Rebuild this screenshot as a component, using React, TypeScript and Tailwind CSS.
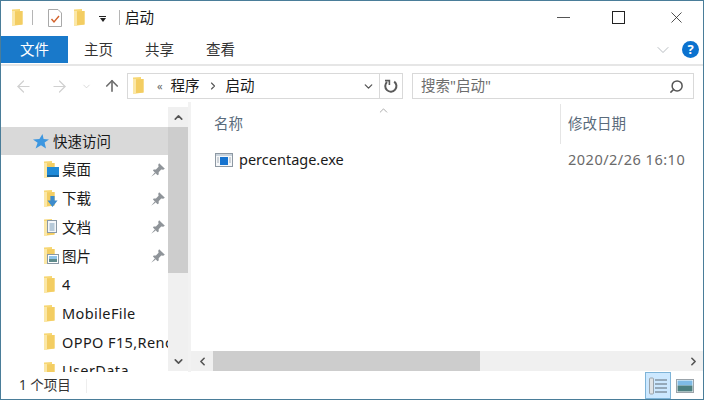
import React from "react"
import { ArrowLeft, ArrowRight, ArrowUp, ChevronDown, ChevronLeft, ChevronRight, ChevronUp, Search, X } from "lucide-react"

const FONT = "font-['Noto_Sans','Noto_Sans_CJK_SC',sans-serif]"

function Folder({ className = "" }: { className?: string }) {
  return (
    <svg width="14" height="20" viewBox="0 0 14 20" className={className}>
      <path d="M1 1.5 L9 1 L9 3 L11.5 3 L11.5 16.5 L1 18 Z" fill="#f7d774" />
      <path d="M1 3 L4 3 L4 18 L1 18 Z" fill="#fbe7a6" />
      <path d="M4 3.5 L11.5 3 L11.5 16.5 L4 17 Z" fill="#f3cd62" />
    </svg>
  )
}

function Pin() {
  return (
    <svg width="16" height="16" viewBox="0 0 14 14">
      <path d="M8 1 L13 6 L11.5 6.8 L9.8 6.6 L7.6 9 L7.6 11 L6.6 11.5 L2.6 7.5 L3.2 6.5 L5.2 6.5 L7.5 4.2 L7.2 2.5 Z" fill="#8f9499" />
      <path d="M4.2 9.2 L1 13 L5 10" fill="#8f9499" />
    </svg>
  )
}

function NavRow({ label, badge, badgeTop, pinned, wide }: { label: string; badge?: React.ReactNode; badgeTop?: string; pinned?: boolean; wide?: boolean }) {
  return (
    <div className="h-[28.7px] flex items-center pl-[42px] shrink-0 relative">
      <Folder />
      {badge && <span className={`absolute left-[46px] flex ${badgeTop}`}>{badge}</span>}
      <span className={`ml-[5px] text-[14.5px] text-[#1a1a1a] whitespace-nowrap overflow-hidden w-[106px] ${wide ? "tracking-[0.4px]" : ""}`}>{label}</span>
      {pinned && <span className="absolute left-[149px] top-[6px]"><Pin /></span>}
    </div>
  )
}

const desktopBadge = (
  <svg width="12" height="10" viewBox="0 0 12 10"><rect x="0" y="0" width="12" height="8" fill="#1f8ad8" /><rect x="0" y="8" width="12" height="2" fill="#14619c" /></svg>
)
const downloadBadge = (
  <svg width="11" height="11" viewBox="0 0 11 12"><path d="M3.2 0 H7.8 V5 H11 L5.5 12 L0 5 H3.2 Z" fill="#3e8ccc" /></svg>
)
const docBadge = (
  <svg width="10" height="13" viewBox="0 0 10 13"><rect x="0.5" y="0.5" width="9" height="12" fill="#f4f7fa" stroke="#8a99a6" /><path d="M2.5 4 H7.5 M2.5 6 H7.5 M2.5 8 H7.5 M2.5 10 H7.5" stroke="#7b9db8" /></svg>
)
const picBadge = (
  <svg width="12" height="10" viewBox="0 0 12 10"><rect x="0.5" y="0.5" width="11" height="9" fill="#fff" stroke="#8a99a6" /><rect x="2" y="2" width="8" height="3" fill="#8fc3e8" /><rect x="2" y="5" width="8" height="3" fill="#5f8c8c" /></svg>
)

export default function App() {
  return (
    <div className={`w-[704px] h-[400px] bg-white border border-[#4a7d99] flex flex-col overflow-hidden ${FONT}`}>
      {/* title bar */}
      <div className="h-[35px] pb-[2px] flex items-center shrink-0 relative">
        <Folder className="ml-[10px]" />
        <div className="w-px h-[15px] bg-[#b5b5b5] ml-[7px]" />
        <svg width="16" height="20" viewBox="0 0 16 20" className="ml-[14px]">
          <path d="M1.5 1.5 H11 L14.5 5 V18.5 H1.5 Z" fill="#fff" stroke="#a9a9a9" />
          <path d="M4.5 11 L7 14 L12 8" fill="none" stroke="#d2622b" strokeWidth="1.4" />
        </svg>
        <Folder className="ml-[10px]" />
        <div className="ml-[12px] flex flex-col items-center gap-[1px] mt-[3px]">
          <div className="w-[7px] h-px bg-[#222]" />
          <div className="w-0 h-0 border-x-[3.5px] border-x-transparent border-t-[4px] border-t-[#222]" />
        </div>
        <div className="w-px h-[15px] bg-[#b5b5b5] ml-[13px]" />
        <span className="ml-[5px] text-[14.5px] text-[#1a1a1a]">启动</span>
        <div className="ml-auto flex items-center">
          <div className="w-[13px] h-[1.5px] bg-[#555]" />
          <div className="w-[13px] h-[13px] border border-[#222] ml-[42px]" />
          <X size={19} strokeWidth={1} className="ml-[42px] mr-[17px] text-[#222]" />
        </div>
      </div>

      {/* ribbon tabs */}
      <div className="h-[27px] mb-[1px] flex items-stretch shrink-0 box-content">
        <div className="w-[67px] bg-[#1979ca] text-white text-[14.5px] flex items-center justify-center">文件</div>
        <div className="flex text-[14.5px] text-[#333] items-center">
          <span className="ml-[16px]">主页</span>
          <span className="ml-[32px]">共享</span>
          <span className="ml-[32px]">查看</span>
        </div>
        <div className="ml-auto flex items-center">
          <ChevronDown size={20} strokeWidth={1} className="text-[#aab0b5] mr-[9px]" />
          <div className="w-[17px] h-[17px] rounded-full bg-[#0b72cf] text-white text-[13px] font-bold flex items-center justify-center mr-[4px]">?</div>
        </div>
      </div>
      <div className="h-[2px] bg-[#e6e6e6] shrink-0" />

      {/* address row */}
      <div className="h-[36px] pt-[4px] flex items-center shrink-0">
        <ArrowLeft size={19} strokeWidth={1.5} className="ml-[13px] text-[#d0d0d0]" />
        <ArrowRight size={19} strokeWidth={1.5} className="ml-[17px] text-[#d0d0d0]" />
        <ChevronDown size={11} strokeWidth={1.5} className="ml-[12px] text-[#c8c8c8]" />
        <ArrowUp size={18} strokeWidth={2.2} className="ml-[11px] text-[#6e6e6e]" />
        <div className="ml-[6px] w-[276px] h-[26px] border border-[#d9d9d9] flex items-center">
          <Folder className="ml-[4px]" />
          <span className="ml-[11px] text-[11px] text-[#666]">«</span>
          <span className="ml-[8px] text-[14.5px] text-[#1a1a1a]">程序</span>
          <ChevronRight size={12} strokeWidth={2.2} className="ml-[7px] text-[#555]" />
          <span className="ml-[7px] text-[14.5px] text-[#1a1a1a]">启动</span>
          <ChevronDown size={13} strokeWidth={2.4} className="ml-auto mr-[2px] text-[#555]" />
          <div className="ml-[2px] h-full border-l border-[#d9d9d9] w-[23px] flex items-center justify-center">
            <svg width="16" height="16" viewBox="0 0 16 16" fill="none" stroke="#5a5a5a" strokeWidth="2">
              <path d="M11.2 3.6 A5.6 5.6 0 1 1 4 4" />
              <path d="M2 2.6 H6.4 V7" strokeWidth="1.6" />
            </svg>
          </div>
        </div>
        <div className="ml-[9px] w-[282px] h-[26px] border border-[#d9d9d9] flex items-center">
          <span className="ml-[8px] text-[14.5px] text-[#6d6d6d]">搜索"启动"</span>
          <Search size={15} strokeWidth={2.4} className="ml-auto mr-[9px] text-[#555] -scale-x-100" />
        </div>
      </div>

      {/* body */}
      <div className="flex-1 min-h-0 flex">
        <div className="w-[167px] shrink-0 overflow-hidden pt-[25px] flex flex-col">
          <div className="h-[28px] mb-[1px] pt-[1px] bg-[#d9d9d9] flex items-center pl-[32px] shrink-0">
            <svg width="16" height="15" viewBox="0 0 16 15"><path d="M9.5 0 L10.6 5 L16 5.6 L11.6 8.6 L13 14.5 L8 11.2 L2.6 14.5 L4.6 8.8 L0 5.6 L6.4 5 Z" fill="#3d97e0" /></svg>
            <span className="ml-[4px] text-[14.5px] text-[#1a1a1a]">快速访问</span>
          </div>
          <NavRow label="桌面" badge={desktopBadge} badgeTop="top-[11px]" pinned />
          <NavRow label="下载" badge={downloadBadge} badgeTop="top-[11px]" pinned />
          <NavRow label="文档" badge={docBadge} badgeTop="top-[7px]" pinned />
          <NavRow label="图片" badge={picBadge} badgeTop="top-[12px]" pinned />
          <NavRow label="4" />
          <NavRow label="MobileFile" wide />
          <NavRow label="OPPO F15,Reno" wide />
          <NavRow label="UserData" wide />
        </div>

        {/* sidebar scrollbar */}
        <div className="w-[20px] shrink-0 flex flex-col pt-[5px] pb-[1px]">
          <div className="h-[20px] bg-[#f0f0f0] flex items-center justify-center shrink-0">
            <ChevronUp size={13} strokeWidth={3} className="text-[#555]" />
          </div>
          <div className="h-[146px] bg-[#cdcdcd] shrink-0" />
          <div className="flex-1 bg-[#f0f0f0]" />
          <div className="h-[20px] bg-[#f0f0f0] flex items-center justify-center shrink-0">
            <ChevronDown size={13} strokeWidth={3} className="text-[#555]" />
          </div>
        </div>
        <div className="w-[3px] bg-[#f2f2f2] shrink-0" />

        {/* main pane */}
        <div className="flex-1 min-w-0 flex flex-col relative">
          <ChevronUp size={13} strokeWidth={1} className="absolute left-[186px] top-[2px] text-[#666]" />
          <div className="flex-1 min-h-0">
            <div className="h-[40px] mt-[2px] flex items-center text-[14.5px] text-[#5a6b7b]">
              <span className="ml-[23px] w-[346px]">名称</span>
              <div className="w-px h-[40px] bg-[#e5e5e5]" />
              <span className="ml-[7px] whitespace-nowrap">修改日期</span>
            </div>
            <div className="flex items-center h-[28px] mt-[2px]">
              <svg width="18" height="14" viewBox="0 0 18 14" className="ml-[24px]">
                <rect x="0.5" y="0.5" width="17" height="13" fill="#f5f7f9" stroke="#8d98a3" />
                <rect x="1" y="1" width="16" height="2" fill="#c9d3dc" />
                <rect x="5" y="4" width="8" height="8" fill="#1673cf" />
                <path d="M2 5 H4 M2 7 H4 M2 9 H4 M14 5 H16 M14 7 H16 M14 9 H16" stroke="#a5aeb7" />
              </svg>
              <span className="ml-[6px] text-[14.5px] text-[#1a1a1a] w-[329px]">percentage.exe</span>
              <span className="text-[14.5px] tracking-[0.5px] text-[#6a6a6a] whitespace-nowrap">2020/2/26 16:10</span>
            </div>
          </div>
          <div className="h-[20px] shrink-0 mb-[1px] flex bg-[#f0f0f0]">
            <div className="w-[22px] flex items-center justify-center">
              <ChevronLeft size={13} strokeWidth={3} className="text-[#555]" />
            </div>
            <div className="w-[267px] bg-[#cdcdcd]" />
            <div className="ml-auto w-[20px] flex items-center justify-center">
              <ChevronRight size={13} strokeWidth={3} className="text-[#555]" />
            </div>
          </div>
        </div>
      </div>

      {/* status bar */}
      <div className="h-[27px] shrink-0 flex items-center relative">
        <span className="ml-[18px] text-[13.5px] text-[#333]">1 个项目</span>
        <div className="w-px h-[14px] bg-[#eeeeee] ml-[15px]" />
        <div className="ml-auto flex items-center h-full mr-[9px]">
          <div className="w-[26px] h-[27px] bg-[#cce8ff] border border-[#7eb4d8] flex items-center justify-center">
            <svg width="18" height="18" viewBox="0 0 18 18">
              <rect x="0.5" y="1" width="4" height="16" rx="1" fill="#dfe3e6" stroke="#9aa3aa" />
              <path d="M6 3 H18 M6 7 H18 M6 11 H18 M6 15 H18" stroke="#5f6b75" />
            </svg>
          </div>
          <svg width="18" height="14" viewBox="0 0 18 14" className="ml-[5px]">
            <rect x="0.5" y="0.5" width="17" height="13" fill="#fff" stroke="#9aa3aa" />
            <rect x="1.5" y="1.5" width="15" height="5" fill="#7fbbe6" />
            <rect x="1.5" y="6.5" width="15" height="6" fill="#4c7f80" />
          </svg>
        </div>
      </div>
    </div>
  )
}
